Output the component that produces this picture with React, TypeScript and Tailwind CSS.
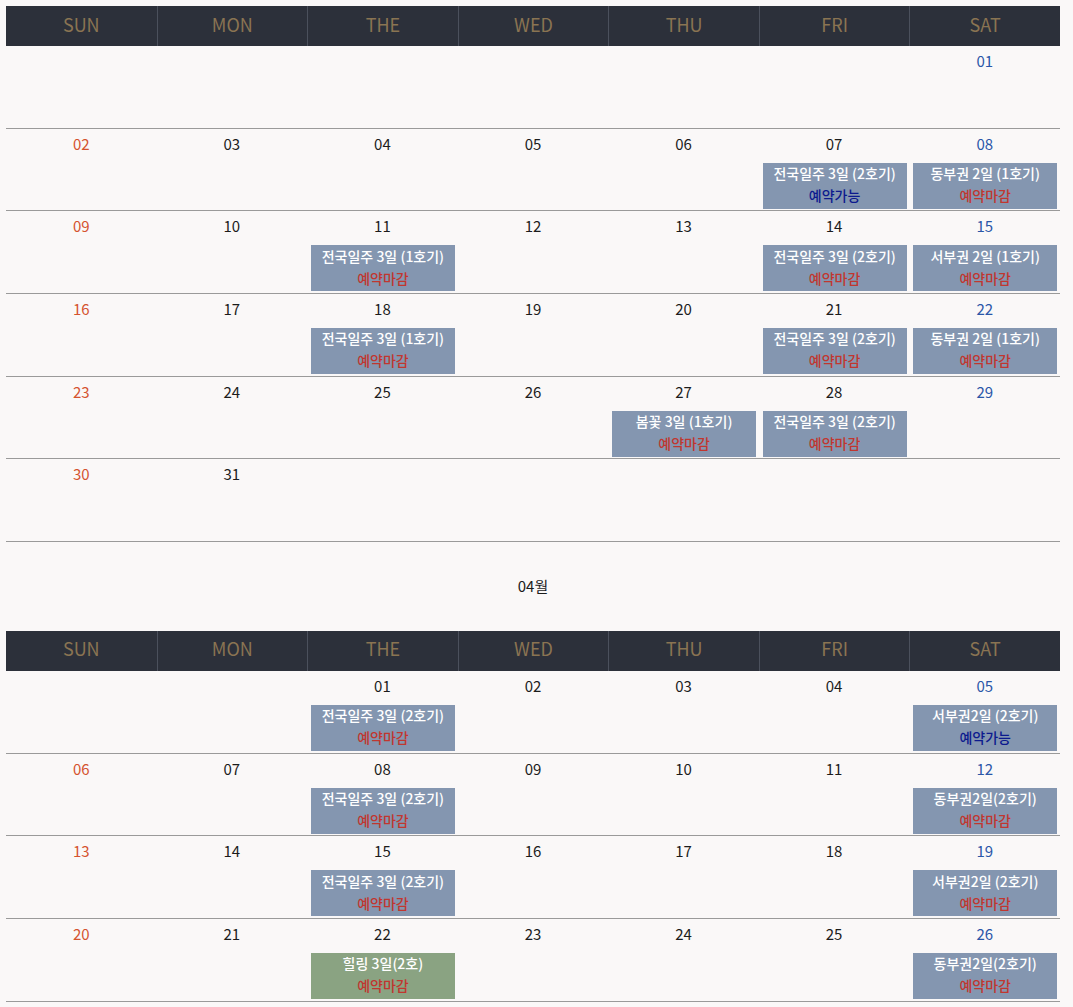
type Ev = { title: string; open?: boolean; green?: boolean };
type Day = { d: string; ev?: Ev } | null;

const heads = ["SUN", "MON", "THE", "WED", "THU", "FRI", "SAT"];

const march: Day[][] = [
  [null, null, null, null, null, null, { d: "01" }],
  [
    { d: "02" },
    { d: "03" },
    { d: "04" },
    { d: "05" },
    { d: "06" },
    { d: "07", ev: { title: "전국일주 3일 (2호기)", open: true } },
    { d: "08", ev: { title: "동부권 2일 (1호기)" } },
  ],
  [
    { d: "09" },
    { d: "10" },
    { d: "11", ev: { title: "전국일주 3일 (1호기)" } },
    { d: "12" },
    { d: "13" },
    { d: "14", ev: { title: "전국일주 3일 (2호기)" } },
    { d: "15", ev: { title: "서부권 2일 (1호기)" } },
  ],
  [
    { d: "16" },
    { d: "17" },
    { d: "18", ev: { title: "전국일주 3일 (1호기)" } },
    { d: "19" },
    { d: "20" },
    { d: "21", ev: { title: "전국일주 3일 (2호기)" } },
    { d: "22", ev: { title: "동부권 2일 (1호기)" } },
  ],
  [
    { d: "23" },
    { d: "24" },
    { d: "25" },
    { d: "26" },
    { d: "27", ev: { title: "봄꽃 3일 (1호기)" } },
    { d: "28", ev: { title: "전국일주 3일 (2호기)" } },
    { d: "29" },
  ],
  [{ d: "30" }, { d: "31" }, null, null, null, null, null],
];

const april: Day[][] = [
  [
    null,
    null,
    { d: "01", ev: { title: "전국일주 3일 (2호기)" } },
    { d: "02" },
    { d: "03" },
    { d: "04" },
    { d: "05", ev: { title: "서부권2일 (2호기)", open: true } },
  ],
  [
    { d: "06" },
    { d: "07" },
    { d: "08", ev: { title: "전국일주 3일 (2호기)" } },
    { d: "09" },
    { d: "10" },
    { d: "11" },
    { d: "12", ev: { title: "동부권2일(2호기)" } },
  ],
  [
    { d: "13" },
    { d: "14" },
    { d: "15", ev: { title: "전국일주 3일 (2호기)" } },
    { d: "16" },
    { d: "17" },
    { d: "18" },
    { d: "19", ev: { title: "서부권2일 (2호기)" } },
  ],
  [
    { d: "20" },
    { d: "21" },
    { d: "22", ev: { title: "힐링 3일(2호)", green: true } },
    { d: "23" },
    { d: "24" },
    { d: "25" },
    { d: "26", ev: { title: "동부권2일(2호기)" } },
  ],
];

function Cell({ day, col }: { day: Day; col: number }) {
  const color =
    col === 0 ? "text-[#d5532f]" : col === 6 ? "text-[#2a56a8]" : "text-[#1c1c1c]";
  return (
    <div className="flex flex-col items-center">
      {day && (
        <>
          <div className={`mt-[5px] h-[20px] text-[15px] leading-[20px] ${color}`}>{day.d}</div>
          {day.ev && (
            <div
              className={`mt-[9px] ml-[1px] flex h-[46px] w-[144px] flex-col items-center justify-center pb-[3px] text-[14px] font-medium leading-[22px] ${
                day.ev.green ? "bg-[#8aa382]" : "bg-[#8496b0]"
              }`}
            >
              <span className="text-white">{day.ev.title}</span>
              <span className={day.ev.open ? "text-[#0c1a8e]" : "text-[#c1362f]"}>
                {day.ev.open ? "예약가능" : "예약마감"}
              </span>
            </div>
          )}
        </>
      )}
    </div>
  );
}

function Calendar({ weeks }: { weeks: Day[][] }) {
  return (
    <div className="w-[1054px]">
      <div className="grid h-[40px] grid-cols-7 bg-[#2c303a]">
        {heads.map((h, i) => (
          <div
            key={h}
            className={`flex items-center justify-center pb-[4px] text-[18px] text-[#8a7452] ${
              i > 0 ? "border-l border-[#4b505c]" : ""
            }`}
          >
            {h}
          </div>
        ))}
      </div>
      {weeks.map((w, i) => (
        <div key={i} className="grid h-[82.67px] grid-cols-7 border-b border-[#9a9a9a]">
          {w.map((day, j) => (
            <Cell key={j} day={day} col={j} />
          ))}
        </div>
      ))}
    </div>
  );
}

export default function App() {
  return (
    <div
      className="min-h-screen bg-[#faf8f8] pt-[6px] pl-[6px]"
      style={{ fontFamily: '"Noto Sans CJK KR", "Noto Sans", sans-serif' }}
    >
      <Calendar weeks={march} />
      <div className="flex h-[89px] w-[1054px] items-center justify-center text-[15px] text-[#1c1c1c]">
        04월
      </div>
      <Calendar weeks={april} />
    </div>
  );
}
